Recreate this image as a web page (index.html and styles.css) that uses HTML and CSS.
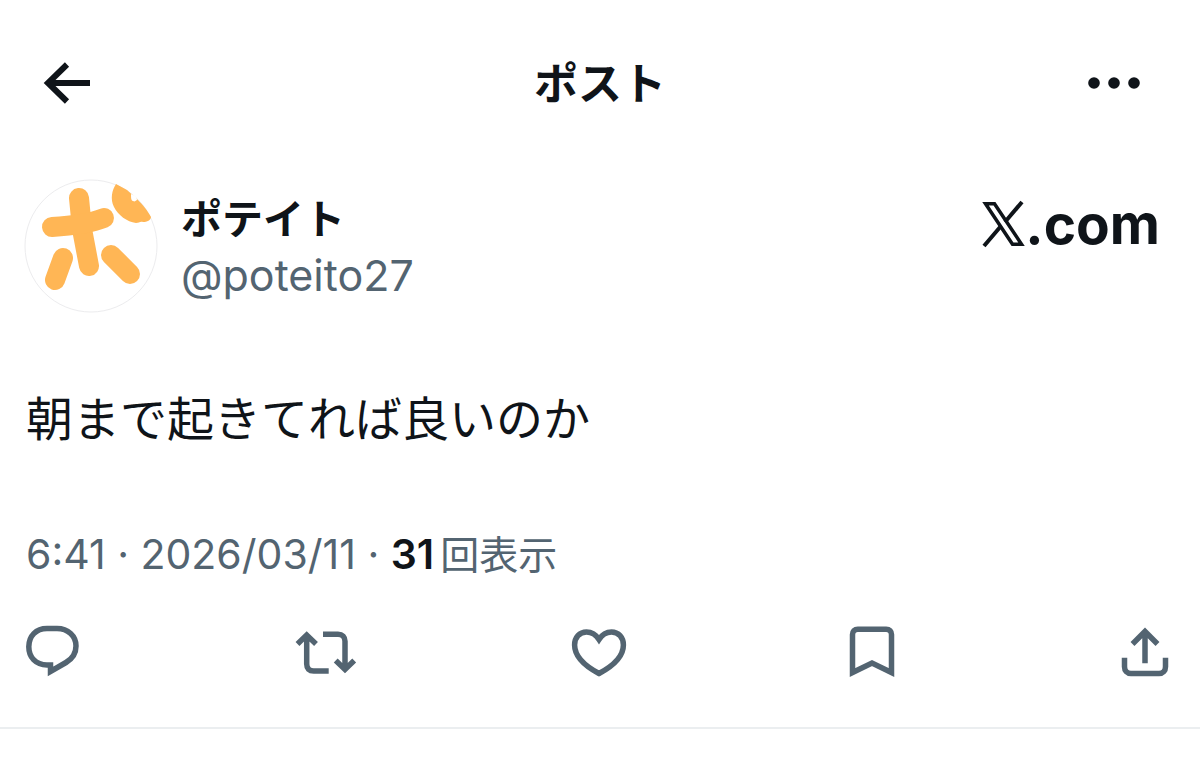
FILE: index.html
```html
<!DOCTYPE html>
<html lang="ja">
<head>
    <meta charset="UTF-8">
    <meta name="viewport" content="width=device-width, initial-scale=1.0">
    <title>ポスト</title>
    <link rel="stylesheet" href="styles.css">
</head>
<body>
    <header class="top-bar">
        <button class="icon-btn" type="button" aria-label="戻る">
            <svg width="80" height="60" viewBox="0 0 80 60" fill="none" stroke="currentColor" stroke-width="6">
                <path d="M27 11.5 8 30l19 18.5M8 30h42"/>
            </svg>
        </button>
        <h1 class="top-title">ポスト</h1>
        <button class="icon-btn" type="button" aria-label="その他">
            <svg width="80" height="60" viewBox="0 0 80 60" fill="currentColor">
                <circle cx="14" cy="30" r="5.8"/>
                <circle cx="34" cy="30" r="5.8"/>
                <circle cx="54" cy="30" r="5.8"/>
            </svg>
        </button>
    </header>

    <main>
        <article class="post">
            <div class="author">
                <!-- アイコン -->
                <a class="avatar" href="#" aria-label="ポテイト">
                    <svg width="134" height="134" viewBox="0 0 134 134" fill="none">
                        <circle cx="67" cy="67" r="66" fill="#fff" stroke="#ececee"/>
                        <g stroke="#ffb655" stroke-width="20" stroke-linecap="round">
                            <path d="M55 19 58 50 65 87"/>
                            <path d="M28 48Q62 46 80 39"/>
                            <path d="M39 79 31 101"/>
                            <path d="M87 76 106 95"/>
                        </g>
                        <path fill="#ffb655" d="M92 5C88 11 86 20 90 28c4 8 13 15 22 16 3 0 4-2 7-1 4 0 8-2 8-5-3-6-9-13-13-17L103 11z"/>
                        <path fill="#fff" d="M107 15c3 1 6 3 6 6-2 1-2 2-4 1-2 0-2-4-2-7z"/>
                    </svg>
                </a>
                <div class="names">
                    <a class="name" href="#">ポテイト</a>
                    <a class="handle" href="#">@poteito27</a>
                </div>
                <div class="brand">
                    <svg width="43" height="44" viewBox="0 0 43 44" fill="none" stroke="currentColor" stroke-width="3.5" aria-label="X">
                        <path d="M3.5 1.8h9L39.5 42.2H30.5z"/>
                        <path d="M40 0 23 20M2 44 19 24" stroke-width="4"/>
                    </svg>
                    <span>.com</span>
                </div>
            </div>

            <p class="text">朝まで起きてれば良いのか</p>

            <p class="meta">6:41 · 2026/03/11 · <strong>31</strong><span class="unit">回表示</span></p>

            <div class="actions">
                <button class="icon-btn" type="button" aria-label="返信">
                    <svg width="60" height="60" viewBox="0 0 60 60">
                        <path d="M24 6.500h10c11 0 19 7.500 19 17.500 0 7.500-4 13-10 16.500L27.500 49.500v-6.500h-3.500C12.500 43 5.800 35 5.800 24.800 5.800 14 13 6.500 24 6.500z"/>
                    </svg>
                </button>
                <button class="icon-btn" type="button" aria-label="リポスト">
                    <svg width="60" height="60" viewBox="0 0 60 60">
                        <path d="M1.500 22 10.700 13l9.300 9M10.700 14v28c0 4.500 2.500 7 7 7h15"/>
                        <path d="M27 12.300h15c4.500 0 7 2.500 7 7V47M39.700 38.500l9.300 9 9.200-9"/>
                    </svg>
                </button>
                <button class="icon-btn" type="button" aria-label="いいね">
                    <svg width="60" height="60" viewBox="0 0 60 60">
                        <path d="M30 17.500C26.500 12 22 10 17.500 10 10.500 10 5.600 15.500 5.600 23 5.600 34 14 43 30 51.500 46 43 54.400 34 54.400 23c0-7.500-4.900-13-11.900-13-4.500 0-9 2-12.500 7.500z"/>
                    </svg>
                </button>
                <button class="icon-btn" type="button" aria-label="ブックマーク">
                    <svg width="60" height="60" viewBox="0 0 60 60">
                        <path d="M10.500 50.500V12.500c0-3 2-5.300 5.300-5.300h28.400c3.300 0 5.300 2.300 5.300 5.300V50.500L30 41z"/>
                    </svg>
                </button>
                <button class="icon-btn" type="button" aria-label="共有">
                    <svg width="60" height="60" viewBox="0 0 60 60">
                        <path d="M17.500 22 30 9.500 42.500 22M30 10v31.300"/>
                        <path d="M9.500 35.700v9c0 4 2.500 6.800 6.500 6.800h28c4 0 6.500-2.800 6.500-6.800v-9"/>
                    </svg>
                </button>
            </div>
        </article>
    </main>
</body>
</html>
```
FILE: styles.css
```css
* {
    box-sizing: border-box;
    margin: 0;
    padding: 0;
}

body {
    background: #fff;
    color: #0f1419;
    font-family: Inter, "Noto Sans CJK JP", sans-serif;
}

a {
    color: inherit;
    text-decoration: none;
}

svg {
    display: block;
    overflow: visible;
}

.icon-btn {
    border: 0;
    background: none;
    color: inherit;
    cursor: pointer;
}

.top-bar {
    display: flex;
    align-items: center;
    justify-content: space-between;
    padding: 53px 40px 0;
}

.top-title {
    padding-top: 2px;
    font-size: 44px;
    font-weight: 700;
    line-height: 58px;
}

.post {
    padding: 66px 26px 45px 24px;
    border-bottom: 2px solid #ebeef0;
}

.author {
    display: flex;
    align-items: flex-start;
    gap: 23px;
}

.names {
    display: flex;
    flex: 1;
    flex-direction: column;
    padding-top: 12px;
}

.name {
    font-size: 41px;
    font-weight: 700;
    line-height: 56px;
}

.handle {
    color: #536471;
    font-size: 43px;
    line-height: 56px;
}

.brand {
    display: flex;
    align-items: center;
    padding: 10px 14px 0 0;
    font-size: 55px;
    font-weight: 700;
    line-height: 70px;
}

.text {
    margin-top: 70px;
    padding-left: 2px;
    font-size: 47px;
    line-height: 72px;
}

.meta {
    margin-top: 71px;
    padding-left: 2px;
    color: #536471;
    font-size: 41px;
    line-height: 56px;
}

.meta strong {
    color: #0f1419;
    font-weight: 600;
}

.unit {
    margin-left: 6px;
    font-size: 39px;
}

.actions {
    display: flex;
    justify-content: space-between;
    margin: 39px -1px 0;
    color: #536471;
}

.actions svg {
    fill: none;
    stroke: currentColor;
    stroke-width: 5.5;
}
```
